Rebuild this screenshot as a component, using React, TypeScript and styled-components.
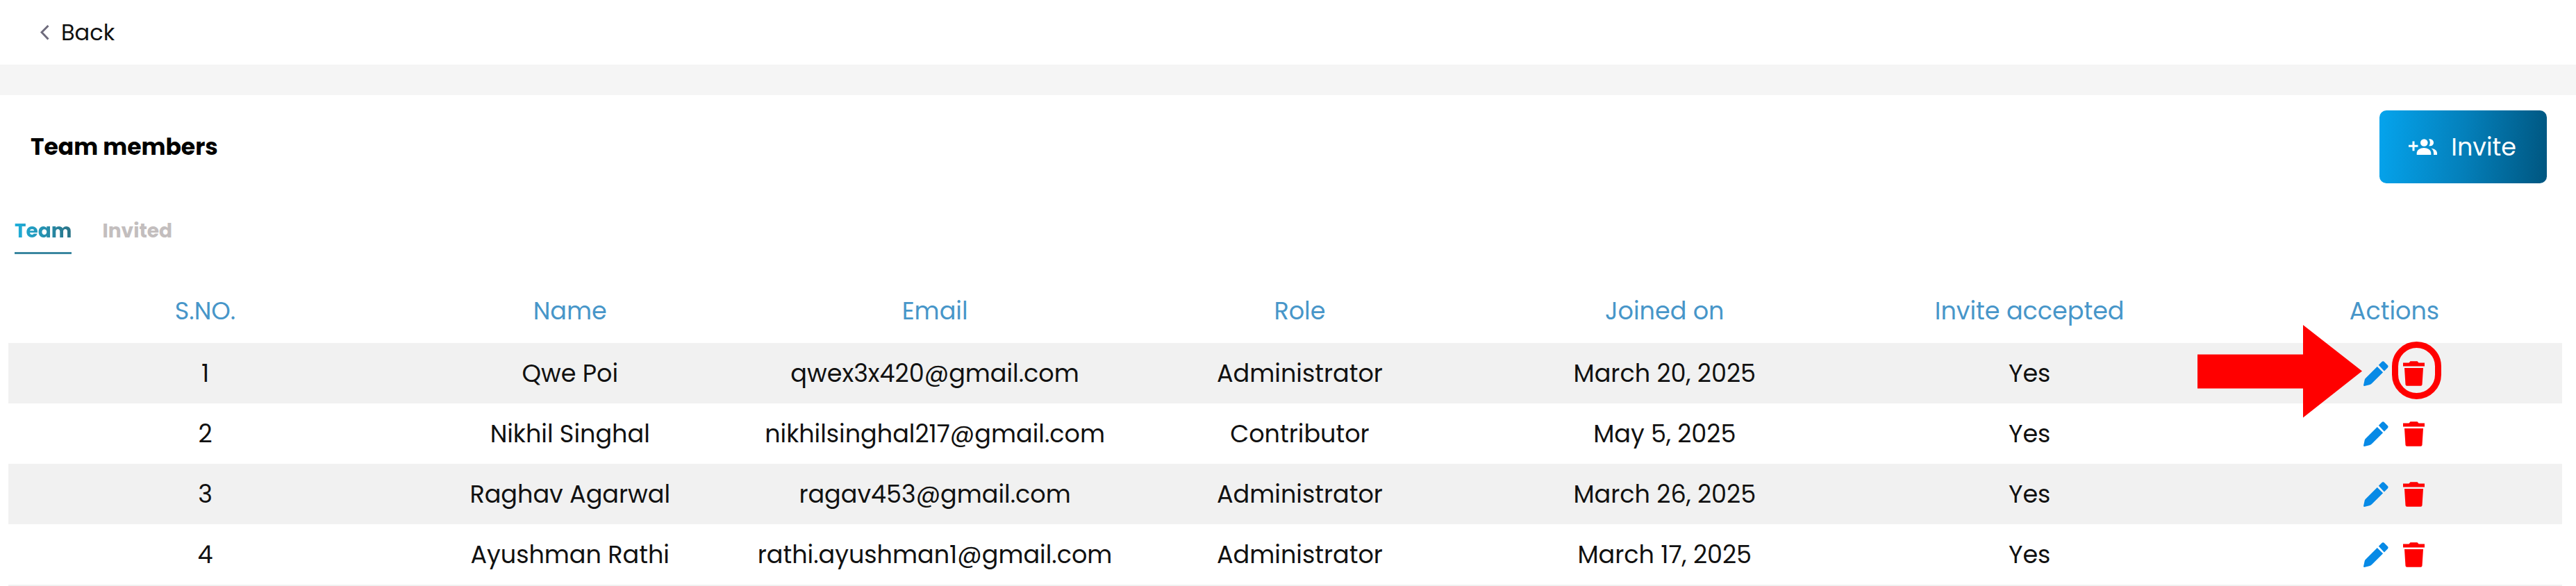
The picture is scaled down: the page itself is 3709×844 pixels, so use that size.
import React, { useState } from 'react';
import styled, { createGlobalStyle } from 'styled-components';

const GlobalStyle = createGlobalStyle`
  *, *::before, *::after { box-sizing: border-box; }
  body {
    margin: 0;
    background: #fff;
    color: #111;
    font-family: Poppins, Inter, "Liberation Sans", sans-serif;
    overflow-x: hidden;
  }
  button { font-family: inherit; cursor: pointer; }
`;

const TopBar = styled.nav`
  display: flex;
  align-items: center;
  height: 93px;
  padding: 0 58px;
`;

const BackLink = styled.a`
  display: flex;
  align-items: center;
  gap: 16px;
  color: #111;
  font-size: 32px;
  line-height: 40px;
  text-decoration: none;
`;

const Divider = styled.div`
  height: 44px;
  background: #f5f5f5;
`;

const PanelHeader = styled.header`
  display: flex;
  align-items: center;
  justify-content: space-between;
  padding: 22px 42px 0 44px;
`;

const Title = styled.h1`
  margin: 0;
  color: #000;
  font-size: 33px;
  font-weight: 700;
  line-height: 40px;
`;

const InviteButton = styled.button`
  display: flex;
  align-items: center;
  gap: 20px;
  height: 105px;
  padding: 0 44px 0 42px;
  border: 0;
  border-radius: 10px;
  background: linear-gradient(95deg, #05a4ed 0%, #0480bb 50%, #005680 100%);
  color: #fff;
  font-size: 35px;
`;

const Tabs = styled.div`
  display: flex;
  gap: 44px;
  margin: 47px 0 35px;
  padding: 0 21px;
`;

const Tab = styled.button<{ $active: boolean }>`
  padding: 0 0 8px;
  border: 0;
  border-bottom: 3px solid ${(p) => (p.$active ? '#3b87a0' : 'transparent')};
  background: none;
  color: #c3bebe;
  font-size: 28px;
  font-weight: 700;
  line-height: 44px;
`;

const TabLabel = styled.span<{ $active: boolean }>`
  ${(p) =>
    p.$active &&
    `
    background: linear-gradient(90deg, #1fb0dc, #2b7386);
    background-clip: text;
    -webkit-background-clip: text;
    color: transparent;
  `}
`;

const TableWrap = styled.div`
  padding: 0 20px 0 12px;
`;

const Table = styled.table`
  width: 100%;
  table-layout: fixed;
  border-spacing: 0;
  border-bottom: 2px solid #f1f1f1;
  font-size: 35px;
  line-height: 44px;
  text-align: center;

  th:first-child { width: 14.85%; }
  th:last-child { width: 13.71%; }
  th:first-child, td:first-child,
  th:last-child, td:last-child { padding-left: 21px; }
`;

const HeadCell = styled.th`
  height: 93px;
  padding: 0;
  color: #4796c9;
  font-weight: 400;
`;

const Row = styled.tr`
  &:nth-child(odd) { background: #f1f1f1; }
`;

const Cell = styled.td`
  height: 87px;
  padding: 0;
`;

const Actions = styled.div`
  position: relative;
  display: flex;
  justify-content: center;
  width: 88px;
  margin: 0 auto;
  gap: 21px;
`;

const IconButton = styled.button`
  display: flex;
  padding: 0;
  border: 0;
  background: none;
`;

const Pointer = styled.svg`
  position: absolute;
  top: -52px;
  right: 90px;
  pointer-events: none;
`;

const Ring = styled.span`
  position: absolute;
  top: -28px;
  right: -24px;
  width: 71px;
  height: 83px;
  border: 9px solid #f00;
  border-radius: 36px;
  pointer-events: none;
`;

const ChevronIcon = () => (
  <svg width="14" height="22" viewBox="0 0 14 22" fill="none" stroke="#6f6c7d" strokeWidth="3" aria-hidden="true">
    <path d="M11.5 1 2 10.500 11.500 20.500" />
  </svg>
);

const GroupAddIcon = () => (
  <svg width="41" height="24" viewBox="0 0 41 24" fill="currentColor" aria-hidden="true">
    <path d="M5.500 3.500h3v5.200h5v3h-5v5.600h-3v-5.600H0v-3h5.500z" />
    <circle cx="22.300" cy="5.500" r="5.300" />
    <path d="M11.700 23v-2.500c0-4.500 5-7.500 10.300-7.500s10.300 3 10.300 7.500V23z" />
    <path d="M29 .400c4-.6 7 1.700 7 5s-3 5.600-7 4.800c1.200-1.400 1.800-3 1.800-4.800S30.200 1.800 29 .400z" />
    <path d="M32.500 13.500c4.800.8 8.500 3.300 8.500 7V23h-5v-2.500c0-2.800-1.200-5.200-3.500-7z" />
  </svg>
);

const PencilIcon = () => (
  <svg width="36" height="36" viewBox="0 0 36 36" fill="#078ae6" aria-hidden="true">
    <path d="M26.500 1q1.700-1.500 3.300 0l5 5q1.500 1.700 0 3.400l-4.900 5.100-8.100-8.700z" />
    <path d="M19.800 7.900l8.300 8.300L12 32.200q-1.500 1.500-3.600 2.100L1.300 36Q-.2 36 .1 34.600L1.700 27q.3-1.300 1.300-2.300z" />
  </svg>
);

const TrashIcon = () => (
  <svg width="31" height="36" viewBox="0 0 31 36" fill="#f00" aria-hidden="true">
    <path d="M0 2.500h8.500L10.500.300h10l2 2.200H31v5H0z" />
    <path d="M2 10h27l-1.500 24q-.2 1.800-2 1.800h-20q-1.800 0-2-1.800z" />
  </svg>
);

const members = [
  { name: 'Qwe Poi', email: 'qwex3x420@gmail.com', role: 'Administrator', joined: 'March 20, 2025', accepted: 'Yes' },
  { name: 'Nikhil Singhal', email: 'nikhilsinghal217@gmail.com', role: 'Contributor', joined: 'May 5, 2025', accepted: 'Yes' },
  { name: 'Raghav Agarwal', email: 'ragav453@gmail.com', role: 'Administrator', joined: 'March 26, 2025', accepted: 'Yes' },
  { name: 'Ayushman Rathi', email: 'rathi.ayushman1@gmail.com', role: 'Administrator', joined: 'March 17, 2025', accepted: 'Yes' },
];

const columns = ['S.NO.', 'Name', 'Email', 'Role', 'Joined on', 'Invite accepted', 'Actions'];
const tabs = ['Team', 'Invited'];

export default function App() {
  const [active, setActive] = useState('Team');

  return (
    <>
      <GlobalStyle />
      <TopBar>
        <BackLink href="#back">
          <ChevronIcon />
          Back
        </BackLink>
      </TopBar>
      <Divider />
      <main>
        <PanelHeader>
          <Title>Team members</Title>
          <InviteButton type="button">
            <GroupAddIcon />
            Invite
          </InviteButton>
        </PanelHeader>
        <Tabs role="tablist">
          {tabs.map((tab) => (
            <Tab
              key={tab}
              type="button"
              role="tab"
              aria-selected={active === tab}
              $active={active === tab}
              onClick={() => setActive(tab)}
            >
              <TabLabel $active={active === tab}>{tab}</TabLabel>
            </Tab>
          ))}
        </Tabs>
        <TableWrap>
          <Table>
            <thead>
              <tr>
                {columns.map((column) => (
                  <HeadCell key={column} scope="col">{column}</HeadCell>
                ))}
              </tr>
            </thead>
            <tbody>
              {members.map((member, index) => (
                <Row key={member.email}>
                  <Cell>{index + 1}</Cell>
                  <Cell>{member.name}</Cell>
                  <Cell>{member.email}</Cell>
                  <Cell>{member.role}</Cell>
                  <Cell>{member.joined}</Cell>
                  <Cell>{member.accepted}</Cell>
                  <Cell>
                    <Actions>
                      <IconButton type="button" aria-label={`Edit ${member.name}`}>
                        <PencilIcon />
                      </IconButton>
                      <IconButton type="button" aria-label={`Delete ${member.name}`}>
                        <TrashIcon />
                      </IconButton>
                      {index === 0 && (
                        <>
                          <Pointer width="237" height="134" viewBox="0 0 237 134" fill="#f00" aria-hidden="true">
                            <path d="M0 42.500h152V0l85 66.500L152 133.500V91.500H0z" />
                          </Pointer>
                          <Ring />
                        </>
                      )}
                    </Actions>
                  </Cell>
                </Row>
              ))}
            </tbody>
          </Table>
        </TableWrap>
      </main>
    </>
  );
}
